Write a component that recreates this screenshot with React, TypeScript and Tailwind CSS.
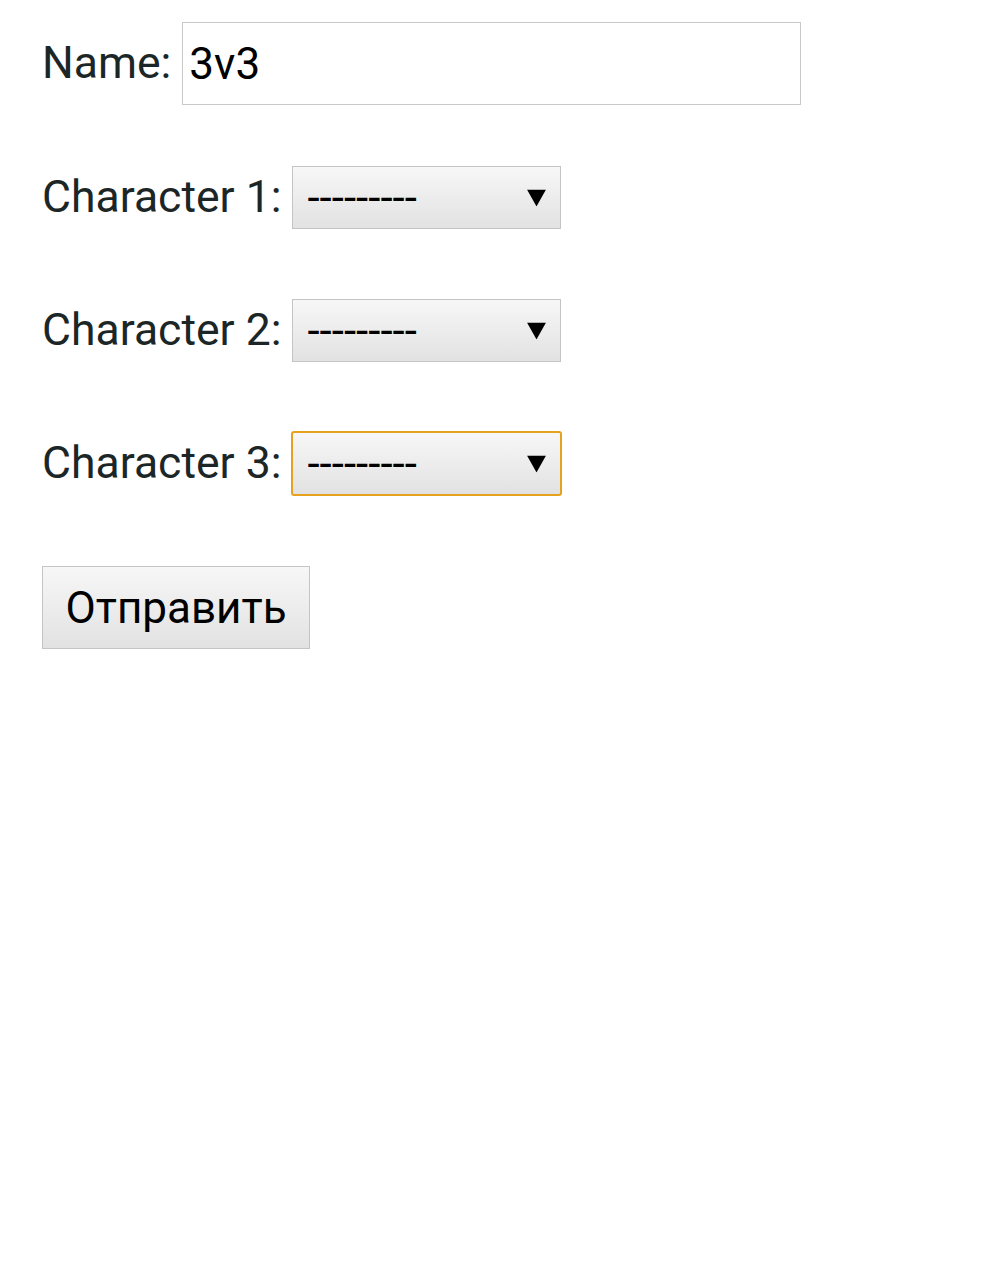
import React from "react";

function Sel({ focused }: { focused?: boolean }) {
  return (
    <div
      className={
        "relative flex items-center bg-gradient-to-b from-[#f7f7f7] to-[#e2e2e2] " +
        (focused
          ? "-mx-[1px] h-[65px] w-[271px] rounded-[3px] border-2 border-[#e6a21d]"
          : "h-[63px] w-[269px] border border-[#c4c4c4]")
      }
    >
      <span className="pl-[14px] text-[44px] leading-none text-black">---------</span>
      <svg
        className="absolute right-[14px] top-1/2 -translate-y-1/2"
        width="19"
        height="17"
        viewBox="0 0 19 17"
      >
        <polygon points="0,0 19,0 9.5,17" fill="#000" />
      </svg>
    </div>
  );
}

export default function App() {
  return (
    <div className="min-h-[1280px] bg-white pl-[42px] pt-[22px] text-[#1c2626]" style={{ fontFamily: "Roboto, 'Noto Sans', sans-serif" }}>
      <div className="flex h-[83px] items-center">
        <span className="text-[44.5px]">Name:</span>
        <div className="ml-[11px] flex h-[83px] w-[619px] items-center border border-[#c8c8c8] bg-white pl-[6px]">
          <span className="text-[44px] text-black">3v3</span>
        </div>
      </div>
      <div className="mt-[61px] flex h-[63px] items-center">
        <span className="text-[44.5px]">Character 1:</span>
        <div className="ml-[11px]"><Sel /></div>
      </div>
      <div className="mt-[70px] flex h-[63px] items-center">
        <span className="text-[44.5px]">Character 2:</span>
        <div className="ml-[11px]"><Sel /></div>
      </div>
      <div className="mt-[70px] flex h-[63px] items-center">
        <span className="text-[44.5px]">Character 3:</span>
        <div className="ml-[11px]"><Sel focused /></div>
      </div>
      <div className="mt-[71px]">
        <button className="flex h-[83px] w-[268px] items-center justify-center border border-[#c4c4c4] bg-gradient-to-b from-[#f7f7f7] to-[#e2e2e2] text-[44px] text-black">
          Отправить
        </button>
      </div>
    </div>
  );
}
